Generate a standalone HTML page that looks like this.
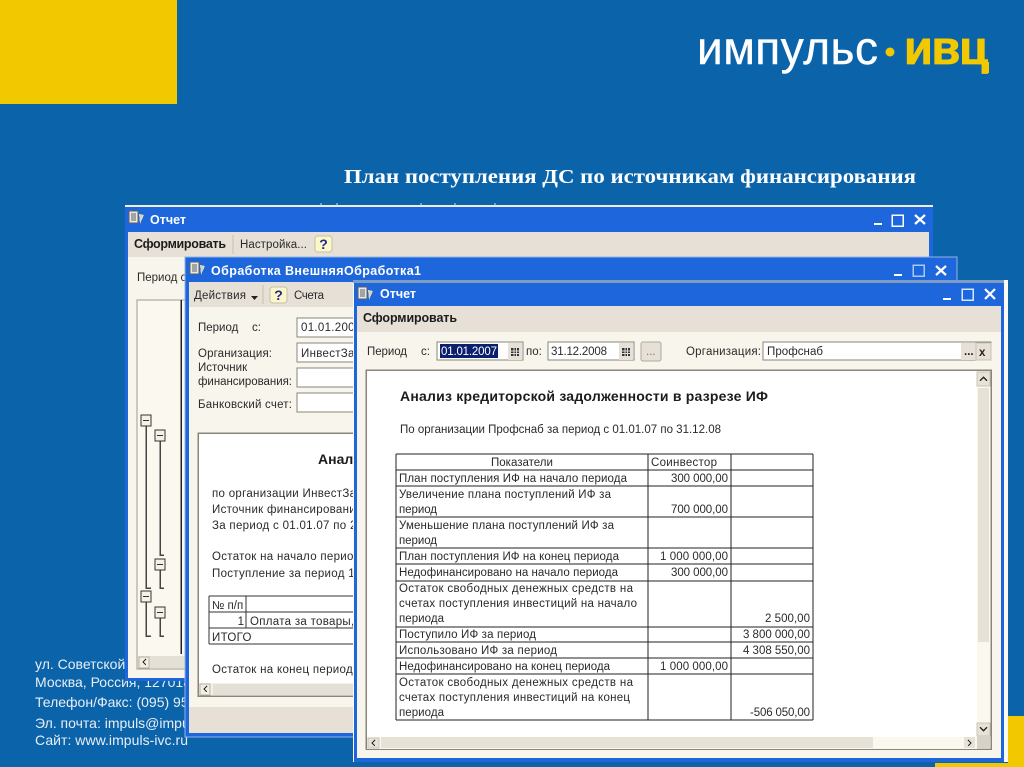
<!DOCTYPE html>
<html><head><meta charset="utf-8"><style>
html,body{margin:0;padding:0;background:#0b63a9;width:1024px;height:767px;overflow:hidden}
svg{display:block}
text{font-family:"Liberation Sans",sans-serif;font-size:11.500px;fill:#2a2a2a}
.b{font-weight:bold;fill:#1c1c1c}
.t{font-weight:bold;fill:#fff;font-size:12.500px}
.f{fill:#e8eef6;font-size:14px}
.v{text-anchor:end}
.s{stroke:#444;stroke-width:1.500;fill:none}
.g{stroke:#2a2a2a;stroke-width:1.3;fill:none}
</style></head><body>
<svg width="1024" height="767" viewBox="0 0 1024 767" xmlns="http://www.w3.org/2000/svg" shape-rendering="crispEdges">
<defs>
<g id="ic"><rect x="0" y="1" width="9" height="12" fill="#ece8dc" stroke="#59616e" stroke-width="1"/><path d="M2 4h5M2 6h5M2 8h5M2 10h5" stroke="#59616e" stroke-width="1"/><path d="M10 4l5 1-4 9z" fill="#d8d4c4"/></g>
<g id="cal"><rect width="14" height="17" fill="#e6e0d6"/><rect x="3" y="5" width="8" height="8" fill="#333"/><path d="M3 8h8M3 10.500h8M6 5v8M8.500 5v8" stroke="#ddd" stroke-width=".7"/></g>
<g id="sq"><rect x="-5" y="-5" width="10" height="11" fill="#f5f1e6" stroke="#333" stroke-width="1.200"/><path d="M-3 .5h6" stroke="#333" stroke-width="1.200"/></g>
<g id="hlp"><rect width="17" height="16" rx="3" fill="#fbf7c8" stroke="#c4c0ae"/><text x="8.500" y="13" text-anchor="middle" style="font-weight:bold;font-size:14px;fill:#1a2a90">?</text></g>
</defs>

<!-- background -->
<rect width="1024" height="767" fill="#0b63a9"/>
<rect width="177" height="104" fill="#f2c900"/>
<rect x="1008" y="716" width="16" height="51" fill="#f2c900"/>
<rect x="935" y="763" width="89" height="4" fill="#f2c900"/>

<!-- logo -->
<g shape-rendering="auto">
<text x="697" y="64" textLength="181" style="font-size:46px;fill:#fff;stroke:#fff;stroke-width:.4">импульс</text>
<circle cx="890" cy="52" r="4.500" fill="#f2c900"/>
<text x="904" y="64" textLength="84" style="font-size:47px;font-weight:bold;fill:#f2c900;stroke:#f2c900;stroke-width:.8">ивц</text>
<rect x="983" y="62" width="6" height="11" fill="#f2c900"/>

<text x="344" y="183" textLength="572" lengthAdjust="spacingAndGlyphs" style="font-family:'Liberation Serif',serif;font-weight:bold;font-size:20px;fill:#fff">План поступления ДС по источникам финансирования</text>

<!-- footer -->
<text class="f" x="35" y="669">ул. Советской Армии, 6</text>
<text class="f" x="35" y="687">Москва, Россия, 127018</text>
<text class="f" x="35" y="707">Телефон/Факс: (095) 956</text>
<text class="f" x="35" y="728">Эл. почта: impuls@impuls-ivc.ru</text>
<text class="f" x="35" y="745" textLength="153">Сайт: www.impuls-ivc.ru</text>
</g>

<!-- WINDOW 1 -->
<rect x="125" y="205" width="808" height="2" fill="#f0eee4"/>
<rect x="125" y="207" width="808" height="474" fill="#1e66dc"/>
<path d="M321 203v3M337 203v3M421 203v3M455 203v3M495 203v3" stroke="#cfe0f0"/>
<rect x="128" y="232" width="801" height="446" fill="#f8f5ec"/>
<rect x="128" y="232" width="801" height="25" fill="#e6e0d6"/>
<use href="#ic" x="129" y="210"/>
<g shape-rendering="auto">
<text class="t" x="150" y="224">Отчет</text>
<text class="b" x="134" y="248" textLength="92" style="font-size:12.500px">Сформировать</text>
<text x="240" y="248" textLength="67">Настройка...</text>
<text x="137" y="281">Период с</text>
</g>
<path d="M233 235v19" stroke="#c8c2b4"/>
<use href="#hlp" x="315" y="236"/>
<path d="M874 224h8" stroke="#fff" stroke-width="2"/>
<rect x="892" y="215" width="11" height="11" fill="none" stroke="#fff" stroke-width="1.500"/>
<path d="M915 215l10 9M925 215l-10 9" stroke="#fff" stroke-width="2.200" shape-rendering="auto"/>
<rect x="137" y="300" width="50" height="369" fill="#fbf8ef" stroke="#a09a8c"/>
<path d="M181 300v354" stroke="#222" stroke-width="1.500"/>
<path d="M146 425v163h5M160 440v115h4M160 569v19h4M146 601v35h5M160 617v19h4" class="s"/>
<use href="#sq" x="146" y="420"/><use href="#sq" x="160" y="435"/><use href="#sq" x="160" y="564"/><use href="#sq" x="146" y="596"/><use href="#sq" x="160" y="612"/>
<rect x="138" y="656" width="48" height="12" fill="#e4e0d5"/>
<rect x="139" y="657" width="10" height="11" fill="#f2eee3" stroke="#b8b2a4"/>
<path d="M146 659l-3 3 3 3" class="g"/>

<!-- WINDOW 2 -->
<rect x="185" y="257" width="772" height="480" fill="#1e66dc" stroke="#8fb4e8"/>
<rect x="189" y="282" width="764" height="451" fill="#f8f5ec"/>
<rect x="189" y="282" width="764" height="25" fill="#e6e0d6"/>
<rect x="189" y="707" width="764" height="26" fill="#e6e0d6"/>
<use href="#ic" x="190" y="261"/>
<g shape-rendering="auto">
<text class="t" x="211" y="275" textLength="210">Обработка  ВнешняяОбработка1</text>
<text x="194" y="299" textLength="52">Действия</text>
<path d="M251 296h7l-3.500 4z" fill="#222"/>
<text x="294" y="299" textLength="30">Счета</text>
<text x="198" y="331">Период</text><text x="252" y="331">с:</text>
<text x="198" y="357" textLength="74">Организация:</text>
<text x="198" y="371">Источник</text>
<text x="198" y="385" textLength="94">финансирования:</text>
<text x="198" y="408" textLength="94">Банковский счет:</text>
</g>
<path d="M263 285v19" stroke="#c8c2b4"/>
<use href="#hlp" x="270" y="287"/>
<rect x="297" y="318" width="60" height="19" fill="#fff" stroke="#8a8578"/>
<rect x="297" y="343" width="60" height="19" fill="#fff" stroke="#8a8578"/>
<rect x="297" y="368" width="60" height="19" fill="#fff" stroke="#8a8578"/>
<rect x="297" y="393" width="60" height="19" fill="#fff" stroke="#8a8578"/>
<g shape-rendering="auto">
<text x="301" y="331" letter-spacing=".3">01.01.2007</text>
<text x="301" y="357" letter-spacing=".3">ИнвестЗащита</text>
</g>
<path d="M894 275h8" stroke="#fff" stroke-width="2"/>
<rect x="913" y="265" width="11" height="11" fill="none" stroke="#a8c8f4" stroke-width="1.500"/>
<path d="M936 266l10 9M946 266l-10 9" stroke="#fff" stroke-width="2.200" shape-rendering="auto"/>
<rect x="198" y="433" width="740" height="263" fill="#fff" stroke="#8a8578" stroke-width="1.500"/>
<g shape-rendering="auto">
<text class="b" x="318" y="464" style="font-size:14px">Анализ</text>
<text x="212" y="497" letter-spacing=".3">по организации ИнвестЗа</text>
<text x="212" y="513" letter-spacing=".3">Источник финансирования</text>
<text x="212" y="529" letter-spacing=".3">За период с 01.01.07 по 29</text>
<text x="212" y="560" letter-spacing=".3">Остаток на начало периода</text>
<text x="212" y="577" letter-spacing=".3">Поступление за период 1</text>
<text x="212" y="609">№ п/п</text>
<text class="v" x="244" y="625">1</text>
<text x="250" y="625" letter-spacing=".3">Оплата за товары,</text>
<text x="212" y="641" letter-spacing=".3">ИТОГО</text>
<text x="212" y="673" letter-spacing=".3">Остаток на конец периода</text>
</g>
<path d="M209 596h160M209 612h160M209 628h160M209 644h160M209 596v48M246 596v32" stroke="#333" stroke-width="1.200" fill="none"/>
<rect x="199" y="683" width="160" height="12" fill="#f5f1e6"/>
<rect x="213" y="684" width="150" height="11" fill="#e4e0d5"/>
<rect x="200" y="684" width="10" height="11" fill="#f2eee3" stroke="#b8b2a4"/>
<path d="M207 686l-3 3 3 3" class="g"/>

<!-- WINDOW 3 -->
<rect x="353" y="280" width="655" height="482" fill="#fbfaf4"/>
<rect x="353" y="280" width="651" height="3" fill="#7e9cc4"/>
<rect x="354" y="283" width="650" height="479" fill="#1e66dc"/>
<rect x="357" y="306" width="644" height="452" fill="#f8f5ec"/>
<rect x="357" y="306" width="644" height="26" fill="#e6e0d6"/>
<use href="#ic" x="358" y="286"/>
<g shape-rendering="auto">
<text class="t" x="380" y="298" textLength="36">Отчет</text>
<text class="b" x="363" y="322" textLength="94" style="font-size:12.500px">Сформировать</text>
<text x="367" y="355" textLength="40">Период</text><text x="421" y="355">с:</text>
<text x="526" y="355">по:</text>
<text x="686" y="355" textLength="75">Организация:</text>
</g>
<path d="M943 299h8" stroke="#fff" stroke-width="2"/>
<rect x="962" y="289" width="11" height="11" fill="none" stroke="#d8e8fa" stroke-width="1.500"/>
<path d="M985 289l10 10M995 289l-10 10" stroke="#fff" stroke-width="2.200" shape-rendering="auto"/>

<rect x="437" y="342" width="86" height="18" fill="#fff" stroke="#8a8578"/>
<rect x="440" y="344" width="58" height="14" fill="#0a1f6e"/>
<use href="#cal" x="508" y="343"/>
<rect x="548" y="342" width="86" height="18" fill="#fff" stroke="#8a8578"/>
<use href="#cal" x="619" y="343"/>
<rect x="641" y="342" width="20" height="19" rx="2" fill="#e6e0d6" stroke="#b0aa9c"/>
<rect x="763" y="342" width="228" height="18" fill="#fff" stroke="#8a8578"/>
<rect x="961" y="343" width="15" height="17" fill="#e6e0d6"/>
<rect x="976" y="343" width="15" height="17" fill="#e6e0d6" stroke="#c8c2b4"/>
<g shape-rendering="auto">
<text x="441" y="355" style="fill:#fff" textLength="56">01.01.2007</text>
<text x="551" y="355" textLength="56">31.12.2008</text>
<text x="646" y="355" style="fill:#777">...</text>
<text x="767" y="355" textLength="56">Профснаб</text>
<text x="964" y="355" style="font-weight:bold;fill:#222">...</text>
<text x="979" y="356" style="font-weight:bold;fill:#222">x</text>
</g>

<rect x="366" y="370" width="625" height="379" fill="#fff" stroke="#8a8578" stroke-width="1.500"/>
<rect x="977" y="371" width="13" height="366" fill="#fbf8ef"/>
<rect x="977" y="372" width="13" height="14" fill="#e6e2d8" stroke="#c8c4b8"/>
<path d="M980 381l3.500-4 3.500 4" class="g"/>
<rect x="978" y="388" width="11" height="254" fill="#e6e2d8"/>
<rect x="977" y="723" width="13" height="13" fill="#e6e2d8" stroke="#c8c4b8"/>
<path d="M980 727l3.500 4 3.500-4" class="g"/>
<rect x="367" y="737" width="623" height="12" fill="#fbf8ef"/>
<rect x="368" y="738" width="11" height="10" fill="#e6e2d8" stroke="#c8c4b8"/>
<path d="M375 740l-3 3 3 3" class="g"/>
<rect x="381" y="737" width="492" height="11" fill="#e6e2d8"/>
<rect x="964" y="737" width="11" height="11" fill="#e6e2d8"/>
<path d="M968 740l3 3-3 3" class="g"/>
<rect x="977" y="736" width="13" height="13" fill="#d6d2c6"/>

<g shape-rendering="auto">
<text class="b" x="400" y="401" textLength="368" style="font-size:14px">Анализ кредиторской задолженности в разрезе ИФ</text>
<text x="400" y="433" textLength="321">По организации Профснаб за период с 01.01.07 по 31.12.08</text>
</g>

<!-- table -->
<path d="M396 454h417M396 470h417M396 486h417M396 517h417M396 548h417M396 564h417M396 581h417M396 627h417M396 642h417M396 658h417M396 674h417M396 720h417" stroke="#222" stroke-width="1.200" fill="none"/>
<path d="M396 454v266M648 454v266M731 454v266M813 454v266" stroke="#222" stroke-width="1.200" fill="none"/>
<g shape-rendering="auto">
<text x="491" y="466">Показатели</text>
<text x="651" y="466" textLength="66">Соинвестор</text>
<text x="399" y="482" textLength="228">План поступления ИФ на начало периода</text>
<text x="399" y="498" textLength="212">Увеличение плана поступлений ИФ за</text>
<text x="399" y="513" textLength="38">период</text>
<text x="399" y="529" textLength="215">Уменьшение плана поступлений ИФ за</text>
<text x="399" y="544" textLength="38">период</text>
<text x="399" y="560" textLength="220">План поступления ИФ на конец периода</text>
<text x="399" y="576" textLength="219">Недофинансировано на начало периода</text>
<text x="399" y="592" textLength="234">Остаток свободных денежных средств на</text>
<text x="399" y="607" textLength="238">счетах поступления инвестиций на начало</text>
<text x="399" y="622" textLength="45">периода</text>
<text x="399" y="638" textLength="137">Поступило ИФ за период</text>
<text x="399" y="654" textLength="158">Использовано ИФ за период</text>
<text x="399" y="670" textLength="211">Недофинансировано на конец периода</text>
<text x="399" y="686" textLength="234">Остаток свободных денежных средств на</text>
<text x="399" y="701" textLength="231">счетах поступления инвестиций на конец</text>
<text x="399" y="716" textLength="45">периода</text>
<text x="671" y="482" textLength="57">300 000,00</text>
<text x="671" y="513" textLength="57">700 000,00</text>
<text x="660" y="560" textLength="68">1 000 000,00</text>
<text x="671" y="576" textLength="57">300 000,00</text>
<text x="765" y="622" textLength="45">2 500,00</text>
<text x="743" y="638" textLength="67">3 800 000,00</text>
<text x="743" y="654" textLength="67">4 308 550,00</text>
<text x="660" y="670" textLength="68">1 000 000,00</text>
<text x="750" y="716" textLength="60">-506 050,00</text>
</g>
</svg>
</body></html>
